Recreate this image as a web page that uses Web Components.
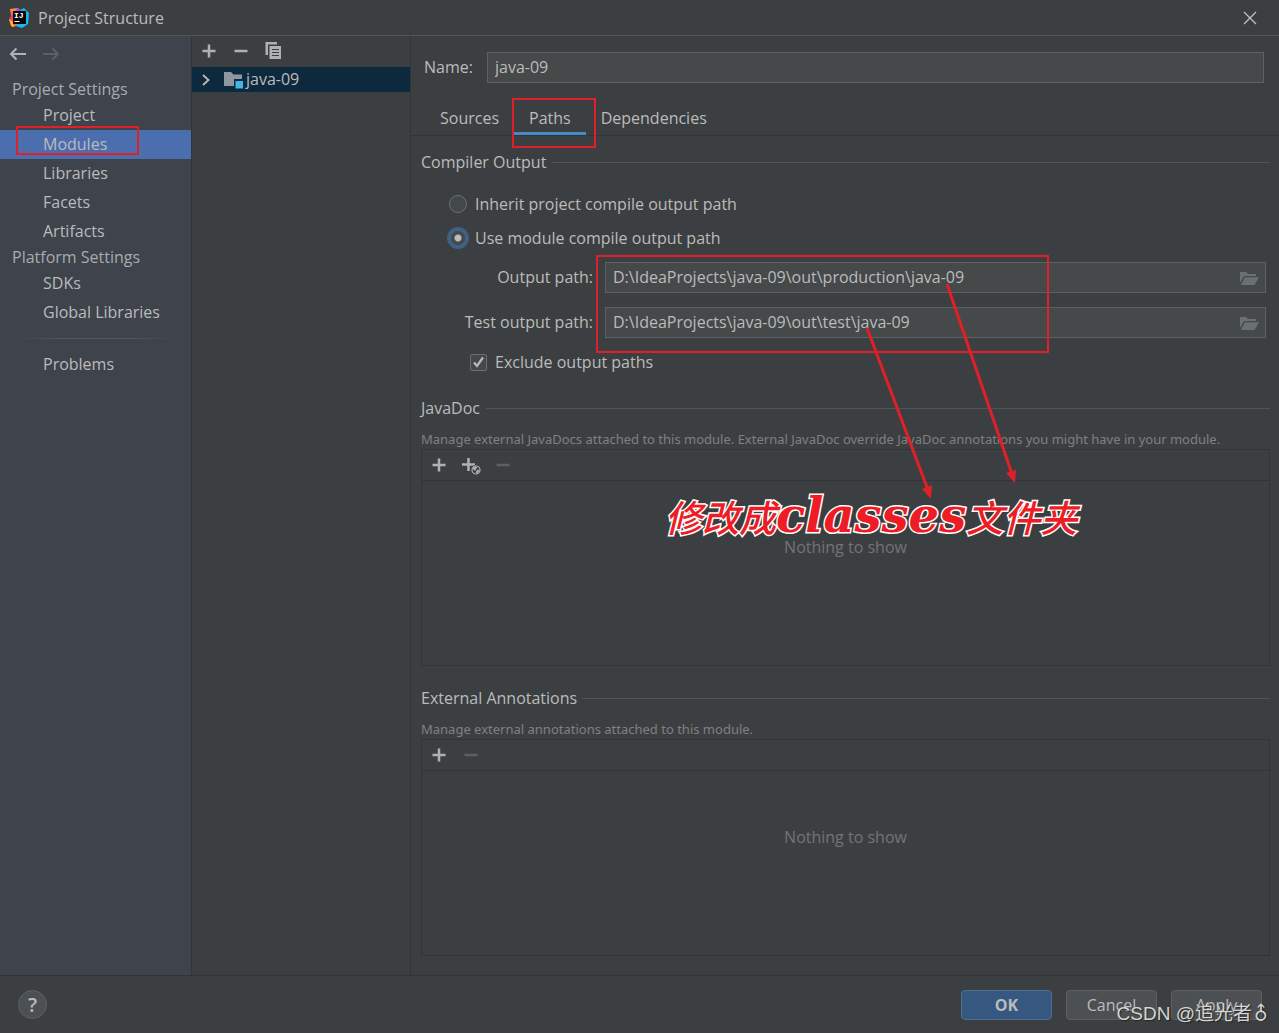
<!DOCTYPE html>
<html lang="en">
<head>
<meta charset="utf-8">
<meta name="viewport" content="width=device-width, initial-scale=1">
<title>Project Structure</title>
<style>
  :root {
    --bg: #3c3f41;
    --text: #bbbbbb;
    --muted: #808080;
    --line: #323537;
    --rule: #515456;
    --field: #45494a;
    --field-border: #5e6162;
    --mark: #e02028;
  }
  html, body { margin: 0; background: var(--bg); }
  body {
    color: var(--text);
    font: 16px/20px "Open Sans", "Noto Sans CJK SC", sans-serif;
  }
</style>
</head>
<body>
<project-structure></project-structure>

<script>
const ICONS = {
  logo: `<svg width="22" height="22" viewBox="0 0 22 22">
    <defs>
      <linearGradient id="a" x1="0" y1="0" x2="0" y2="1"><stop offset="0" stop-color="#f7a13c"/><stop offset=".5" stop-color="#f0386b"/><stop offset="1" stop-color="#fc801d"/></linearGradient>
      <linearGradient id="b" x1="0" y1="0" x2="1" y2="1"><stop offset="0" stop-color="#2f9df4"/><stop offset="1" stop-color="#12c3f5"/></linearGradient>
    </defs>
    <path d="M2 2 10 1 12 6 9 19 4 20 1 13 3 9Z" fill="url(#a)"/>
    <path d="M1 12 5 15 6 20 3 19Z" fill="#ffb12a"/>
    <path d="M9 1 12 2 11 5 7 5Z" fill="#b14be0"/>
    <path d="M12 3 16 1 21 6 20 17 14 21 8 19 12 10Z" fill="url(#b)"/>
    <path d="M5 4H18V17H5Z" fill="#080808"/>
    <rect x="6.500" y="14" width="5" height="1" fill="#fff"/>
    <text x="6" y="11" font-family="Liberation Mono" font-size="8" font-weight="700" fill="#fff">IJ</text>
  </svg>`,
  close: `<svg width="14" height="14" viewBox="0 0 14 14" fill="none" stroke="#c4c4c4" stroke-width="1.2"><path d="M1 1 13 13M13 1 1 13"/></svg>`,
  back: `<svg width="18" height="14" viewBox="0 0 18 14" fill="none" stroke="currentColor" stroke-width="2.200"><path d="M17 7H2M7.500 1.500 2 7 7.500 12.500"/></svg>`,
  forward: `<svg width="18" height="14" viewBox="0 0 18 14" fill="none" stroke="currentColor" stroke-width="2.200"><path d="M1 7H16M10.500 1.500 16 7 10.500 12.500"/></svg>`,
  plus: `<svg width="14" height="14" viewBox="0 0 14 14" fill="none" stroke="currentColor" stroke-width="2.500"><path d="M7 .5V13.500M.5 7H13.500"/></svg>`,
  minus: `<svg width="14" height="14" viewBox="0 0 14 14" fill="none" stroke="currentColor" stroke-width="2.500"><path d="M.5 7H13.500"/></svg>`,
  copy: `<svg width="18" height="18" viewBox="0 0 18 18"><path d="M2 0H13V2.500H4V13H1.500V0Z" fill="currentColor"/><path d="M5.500 4H17V17H5.500Z" fill="currentColor"/><path d="M8 7.500H15M8 10.500H15M8 13.500H15" stroke="#3c3f41" stroke-width="1.200"/></svg>`,
  plusWeb: `<svg width="20" height="20" viewBox="0 0 20 20"><path d="M7.500 3V16M1 9.500H14" stroke="currentColor" stroke-width="2.500"/><circle cx="15" cy="15" r="5.200" fill="#3c3f41"/><circle cx="15" cy="15" r="4" fill="none" stroke="currentColor" stroke-width="1.200"/><path d="M11.500 13.500 13.500 11.500 16.500 12 15 14 14 16ZM16.500 14.500 18.500 15.500 16.500 18.500 14.500 17.500Z" fill="currentColor"/></svg>`,
  chevron: `<svg width="8" height="12" viewBox="0 0 8 12" fill="none" stroke="currentColor" stroke-width="1.800"><path d="M1 1 6.500 6 1 11"/></svg>`,
  module: `<svg width="20" height="18" viewBox="0 0 20 18"><path d="M0 1H7L9.500 3.500H18V8H10V15H0Z" fill="#8d979d"/><path d="M11.500 10H19V17.500H11.500Z" fill="#40b6e0"/></svg>`,
  folder: `<svg width="19" height="16" viewBox="0 0 19 16" fill="#6b7073"><path d="M0 2H6L8 4H16V6H4L0 13Z"/><path d="M5 7.200H19L14.500 15H.8Z"/></svg>`
};

function define(name, render) {
  customElements.define(name, class extends HTMLElement {
    constructor() {
      super();
      this.attachShadow({ mode: "open" });
    }
    connectedCallback() {
      const t = document.createElement("template");
      t.innerHTML = "<style>*{box-sizing:border-box}button{font:inherit;color:inherit;background:none;border:0;padding:0;margin:0}svg{display:block}</style>" + render(this);
      this.shadowRoot.replaceChildren(t.content.cloneNode(true));
    }
  });
}

define("tool-button", el => `
  <style>
    :host { display: inline-flex; color: #afb1b3; }
    :host([disabled]) { color: #5d5f61; }
    button { display: grid; place-items: center; min-width: 20px; height: 20px; }
  </style>
  <button aria-label="${el.getAttribute("label")}" ${el.hasAttribute("disabled") ? "disabled" : ""}>${ICONS[el.getAttribute("icon")]}</button>`);

define("title-bar", () => `
  <style>
    :host { display: flex; align-items: center; gap: 8px; height: 36px; padding: 0 19px 0 8px; border-bottom: 1px solid var(--rule); box-sizing: border-box; }
    h1 { flex: 1; margin: 0; font: inherit; }
  </style>
  ${ICONS.logo}<h1><slot></slot></h1><tool-button icon="close" label="Close"></tool-button>`);

define("nav-item", el => `
  <style>
    :host { display: block; }
    :host([selected]) { background: #4b6eaf; }
    a { display: block; padding: 4px 0 5px 43px; color: inherit; text-decoration: none; }
  </style>
  <a href="#"><slot></slot></a>`);

define("nav-group", el => `
  <style>
    :host { display: block; }
    h2 { margin: 0; padding: 1px 0 2px 12px; font: inherit; color: #a9abae; }
    hr { height: 1px; margin: 11px 14px; border: 0; background: linear-gradient(90deg, transparent, #55585a 30%, #55585a 70%, transparent); }
  </style>
  ${el.getAttribute("heading") ? `<h2>${el.getAttribute("heading")}</h2>` : "<hr>"}<slot></slot>`);

define("settings-nav", () => `
  <style>
    :host { display: block; width: 192px; flex: none; box-sizing: border-box; background: #3e434c; border-right: 1px solid var(--line); }
    .history { display: flex; gap: 13px; padding: 8px 8px 14px; }
  </style>
  <div class="history"><tool-button icon="back" label="Back"></tool-button><tool-button icon="forward" label="Forward" disabled></tool-button></div>
  <nav>
    <nav-group heading="Project Settings">
      <nav-item>Project</nav-item><nav-item selected>Modules</nav-item><nav-item>Libraries</nav-item><nav-item>Facets</nav-item><nav-item>Artifacts</nav-item>
    </nav-group>
    <nav-group heading="Platform Settings">
      <nav-item>SDKs</nav-item><nav-item>Global Libraries</nav-item>
    </nav-group>
    <nav-group><nav-item>Problems</nav-item></nav-group>
  </nav>`);

define("module-tree", () => `
  <style>
    :host { display: block; width: 219px; flex: none; box-sizing: border-box; border-right: 1px solid var(--line); }
    .tools { display: flex; gap: 12px; padding: 5px 7px 6px; }
    .row { display: flex; align-items: center; height: 25px; padding-left: 10px; background: #0d293e; }
    .row span { padding-bottom: 2px; }
    .row svg + svg { margin: 0 2px 0 14px; }
  </style>
  <div class="tools"><tool-button icon="plus" label="Add"></tool-button><tool-button icon="minus" label="Remove"></tool-button><tool-button icon="copy" label="Copy"></tool-button></div>
  <div class="row">${ICONS.chevron}${ICONS.module}<span>java-09</span></div>`);

define("text-field", el => `
  <style>
    :host { display: flex; align-items: center; gap: 12px; }
    label { width: var(--label-width); padding-bottom: 2px; text-align: var(--label-align, left); }
    .box { flex: 1; display: flex; align-items: center; height: 31px; padding: 0 6px 0 7px; background: var(--field); border: 1px solid var(--field-border); }
    input { flex: 1; min-width: 0; padding: 0 0 2px; border: 0; outline: 0; background: none; color: inherit; font: inherit; }
    tool-button { color: #6b7073; }
  </style>
  <label for="f">${el.getAttribute("label")}</label>
  <div class="box"><input id="f" type="text" value="${el.getAttribute("value")}">${el.hasAttribute("browse") ? '<tool-button icon="folder" label="Browse"></tool-button>' : ""}</div>`);

define("tab-strip", () => `
  <style>
    :host { display: flex; padding: 18px 0 0 14px; border-bottom: 1px solid var(--line); }
    button { height: 34px; padding: 2px 15px 0; border-bottom: 3px solid transparent; }
    button[aria-selected=true] { border-color: #4a88c7; }
  </style>
  <button role="tab">Sources</button><button role="tab" aria-selected="true">Paths</button><button role="tab">Dependencies</button>`);

define("section-title", () => `
  <style>
    :host { display: flex; align-items: center; gap: 6px; }
    h2 { margin: 0; font: inherit; }
    i { flex: 1; height: 1px; background: var(--rule); }
  </style>
  <h2><slot></slot></h2><i></i>`);

define("choice-group", () => `
  <style>
    :host { display: flex; flex-direction: column; gap: 14px; padding-left: 28px; }
    label { display: flex; align-items: center; gap: 8px; }
    input { appearance: none; width: 18px; height: 18px; margin: 0; border: 1px solid #6b6e70; border-radius: 50%; background: #43494a; }
    input:checked { background: radial-gradient(circle, #bbb 0 3px, #43494a 4px); border: 1px solid #466d94; box-shadow: 0 0 0 2px #3d6185, inset 0 0 0 1px #3d6185; }
  </style>
  <label><input type="radio" name="out">Inherit project compile output path</label>
  <label><input type="radio" name="out" checked>Use module compile output path</label>`);

define("check-option", () => `
  <style>
    :host { display: block; }
    label { display: flex; align-items: center; gap: 8px; }
    .tick { display: grid; }
    .tick > * { grid-area: 1 / 1; }
    input { appearance: none; width: 17px; height: 17px; margin: 0; border: 1px solid #6b6e70; border-radius: 2px; background: #43494a; }
    svg { pointer-events: none; }
  </style>
  <label><span class="tick"><input type="checkbox" checked><svg width="17" height="17" viewBox="0 0 17 17" fill="none" stroke="#bbb" stroke-width="2.200"><path d="M4 8.500 7 12 13 3.500"/></svg></span><slot></slot></label>`);

define("list-panel", el => `
  <style>
    :host { display: flex; flex-direction: column; flex: 1; }
    p { margin: 12px 0 0; font: 13px/19px "Noto Sans", sans-serif; color: var(--muted); }
    .frame { flex: 1; border: 1px solid var(--line); }
    .tools { display: flex; gap: 12px; height: 31px; padding: 5px 7px; border-bottom: 1px solid var(--line); }
    .empty { padding-top: 56px; text-align: center; color: #727475; }
  </style>
  <section-title>${el.getAttribute("heading")}</section-title>
  <p>${el.getAttribute("note")}</p>
  <div class="frame"><div class="tools"><slot></slot></div><div class="empty">Nothing to show</div></div>`);

define("module-editor", () => `
  <style>
    :host { display: flex; flex-direction: column; flex: 1; min-width: 0; }
    .name { padding: 16px 15px 0 13px; --label-width: 51px; }
    .page { flex: 1; display: flex; flex-direction: column; padding: 16px 9px 19px 10px; }
    choice-group { margin-top: 22px; }
    .paths { display: flex; flex-direction: column; gap: 14px; padding: 14px 4px 0 0; --label-width: 172px; --label-align: right; }
    check-option { margin: 14px 0 0 49px; }
    list-panel { margin-top: 26px; }
    list-panel + list-panel { margin-top: 22px; }
  </style>
  <div class="name"><text-field label="Name:" value="java-09"></text-field></div>
  <tab-strip></tab-strip>
  <div class="page">
    <section-title>Compiler Output</section-title>
    <choice-group></choice-group>
    <div class="paths">
      <text-field browse label="Output path:" value="D:\\IdeaProjects\\java-09\\out\\production\\java-09"></text-field>
      <text-field browse label="Test output path:" value="D:\\IdeaProjects\\java-09\\out\\test\\java-09"></text-field>
    </div>
    <check-option>Exclude output paths</check-option>
    <list-panel heading="JavaDoc" note="Manage external JavaDocs attached to this module. External JavaDoc override JavaDoc annotations you might have in your module.">
      <tool-button icon="plus" label="Add"></tool-button><tool-button icon="plusWeb" label="Add URL"></tool-button><tool-button icon="minus" label="Remove" disabled></tool-button>
    </list-panel>
    <list-panel heading="External Annotations" note="Manage external annotations attached to this module.">
      <tool-button icon="plus" label="Add"></tool-button><tool-button icon="minus" label="Remove" disabled></tool-button>
    </list-panel>
  </div>`);

define("dialog-footer", () => `
  <style>
    :host { display: flex; align-items: center; gap: 14px; height: 58px; box-sizing: border-box; padding: 0 17px 0 18px; border-top: 1px solid var(--line); }
    button { width: 91px; height: 30px; border: 1px solid #5e6060; border-radius: 4px; background: #4c5052; }
    .ok { background: #365880; border-color: #4c708c; font-weight: 700; }
    .help { width: 29px; height: 29px; border-radius: 50%; margin-right: auto; font-size: 20px; font-weight: 600; }
  </style>
  <button class="help" aria-label="Help">?</button>
  <button class="ok">OK</button><button>Cancel</button><button>Apply</button>`);

define("markup-layer", () => `
  <style>
    :host { position: absolute; inset: 0; pointer-events: none; overflow: hidden; }
    svg { position: absolute; left: 0; top: 0; }
    .callout { position: absolute; left: 665px; top: 489px; white-space: nowrap; font: italic 500 37px/52px "Noto Sans CJK SC", sans-serif; color: #ee1c25; -webkit-text-stroke: 3px #fff; paint-order: stroke fill; }
    .callout b { font: italic 700 48px/52px "DejaVu Serif", serif; }
    .credit { position: absolute; right: 10px; bottom: 6px; font: 19px/26px "Liberation Sans", "Noto Sans CJK SC", sans-serif; color: #d4d5d5; text-shadow: 1px 1px 1px #222; }
    .credit span { display: inline-block; font-family: "DejaVu Sans", sans-serif; transform: rotate(-45deg); }
  </style>
  <svg width="1279" height="1033" viewBox="0 0 1279 1033" fill="none" stroke="var(--mark)" stroke-width="2">
    <path d="M17 127H138V154H17ZM513 99H595V147H513ZM597 256H1048V352H597Z"/>
    <path d="M867 328 928 490M947 284 1012 474" stroke-width="3"/>
    <path d="M931 499 922 489 932 485ZM1015 483 1006 473 1016 470Z" fill="var(--mark)" stroke="none"/>
  </svg>
  <div class="callout">修改成<b>classes</b>文件夹</div>
  <div class="credit">CSDN @追光者<span>♂</span></div>`);

define("project-structure", () => `
  <style>
    :host { position: relative; display: flex; flex-direction: column; min-height: 100vh; background: var(--bg); }
    main { flex: 1; display: flex; }
  </style>
  <title-bar>Project Structure</title-bar>
  <main><settings-nav></settings-nav><module-tree></module-tree><module-editor></module-editor></main>
  <dialog-footer></dialog-footer>
  <markup-layer></markup-layer>`);
</script>
</body>
</html>
